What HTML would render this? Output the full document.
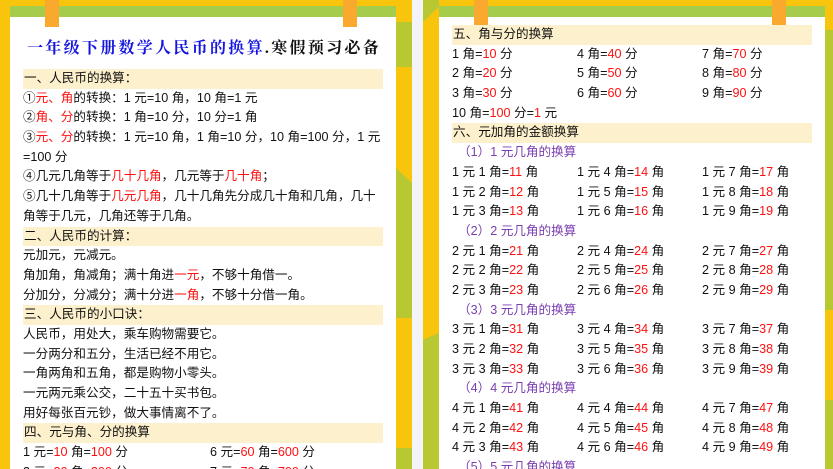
<!DOCTYPE html>
<html><head><meta charset="utf-8"><style>
*{margin:0;padding:0;box-sizing:border-box}
html,body{width:833px;height:469px;overflow:hidden}
body{background:#f3f4f8;position:relative;font-family:"Liberation Sans","Noto Sans CJK SC",sans-serif;font-size:12.6px;color:#111}
.abs{position:absolute}
.y{background:#f9c50c}
.g{background:#b8c832}
.card{background:#fff}
.bar{background:#a6cc4b;height:11px;top:6px}
.tab{background:#f9aa2e;width:14px;top:0;height:27px}
.lines div{height:19.7px;line-height:19.7px;white-space:nowrap}
.h{background:#fdf0cc;padding-left:1px}
.r{color:#ff1010}
.p{color:#7a3fb0;padding-left:6px}
.c{display:inline-block}
</style></head><body>
<div class="abs y" style="left:0;top:0;width:412px;height:469px"></div>
<div class="abs g" style="left:396px;top:22px;width:16px;height:45px;clip-path:polygon(0 0,100% 0,100% 100%,0 100%)"></div>
<div class="abs g" style="left:396px;top:168px;width:16px;height:150px;clip-path:polygon(0 0,100% 10%,100% 100%,0 100%)"></div>
<div class="abs g" style="left:396px;top:448px;width:16px;height:21px"></div>
<div class="abs card" style="left:10px;top:6px;width:386px;height:463px"></div>
<div class="abs bar" style="left:10px;width:386px"></div>
<div class="abs tab" style="left:45px"></div>
<div class="abs tab" style="left:343px"></div>
<div class="abs" style="left:27px;top:35px;font-family:'Liberation Serif','Noto Serif CJK SC',serif;font-weight:bold;font-size:16px;letter-spacing:2.3px;white-space:nowrap;color:#111"><span style="color:#1515e0">一年级下册数学人民币的换算</span>.寒假预习必备</div>
<div class="abs lines" style="left:23px;top:69px;width:360px">
<div class="h">一、人民币的换算：</div>
<div>①<span class="r">元、角</span>的转换：1 元=10 角，10 角=1 元</div>
<div>②<span class="r">角、分</span>的转换：1 角=10 分，10 分=1 角</div>
<div>③<span class="r">元、分</span>的转换：1 元=10 角，1 角=10 分，10 角=100 分，1 元</div>
<div>=100 分</div>
<div>④几元几角等于<span class="r">几十几角</span>，几元等于<span class="r">几十角</span>；</div>
<div>⑤几十几角等于<span class="r">几元几角</span>，几十几角先分成几十角和几角，几十</div>
<div>角等于几元，几角还等于几角。</div>
<div class="h">二、人民币的计算：</div>
<div>元加元，元减元。</div>
<div>角加角，角减角；满十角进<span class="r">一元</span>，不够十角借一。</div>
<div>分加分，分减分；满十分进<span class="r">一角</span>，不够十分借一角。</div>
<div class="h">三、人民币的小口诀：</div>
<div>人民币，用处大，乘车购物需要它。</div>
<div>一分两分和五分，生活已经不用它。</div>
<div>一角两角和五角，都是购物小零头。</div>
<div>一元两元乘公交，二十五十买书包。</div>
<div>用好每张百元钞，做大事情离不了。</div>
<div class="h">四、元与角、分的换算</div>
<div><span class="c" style="width:187px">1 元=<span class="r">10</span> 角=<span class="r">100</span> 分</span>6 元=<span class="r">60</span> 角=<span class="r">600</span> 分</div>
<div><span class="c" style="width:187px">2 元=<span class="r">20</span> 角=<span class="r">200</span> 分</span>7 元=<span class="r">70</span> 角=<span class="r">700</span> 分</div>
</div>
<div class="abs y" style="left:423px;top:0;width:410px;height:469px"></div>
<div class="abs g" style="left:423px;top:0;width:16px;height:22px;clip-path:polygon(0 0,100% 0,100% 30%,0 100%)"></div>
<div class="abs g" style="left:423px;top:333px;width:16px;height:136px;clip-path:polygon(0 5%,100% 0,100% 100%,0 100%)"></div>
<div class="abs g" style="left:825px;top:30px;width:8px;height:280px"></div>
<div class="abs g" style="left:825px;top:400px;width:8px;height:69px"></div>
<div class="abs card" style="left:439px;top:6px;width:386px;height:463px"></div>
<div class="abs bar" style="left:439px;width:386px"></div>
<div class="abs tab" style="left:474px"></div>
<div class="abs tab" style="left:772px"></div>
<div class="abs lines" style="left:452px;top:25px;width:360px">
<div class="h">五、角与分的换算</div>
<div><span class="c" style="width:125px">1 角=<span class="r">10</span> 分</span><span class="c" style="width:125px">4 角=<span class="r">40</span> 分</span>7 角=<span class="r">70</span> 分</div>
<div><span class="c" style="width:125px">2 角=<span class="r">20</span> 分</span><span class="c" style="width:125px">5 角=<span class="r">50</span> 分</span>8 角=<span class="r">80</span> 分</div>
<div><span class="c" style="width:125px">3 角=<span class="r">30</span> 分</span><span class="c" style="width:125px">6 角=<span class="r">60</span> 分</span>9 角=<span class="r">90</span> 分</div>
<div>10 角=<span class="r">100</span> 分=<span class="r">1</span> 元</div>
<div class="h">六、元加角的金额换算</div>
<div class="p">（1）1 元几角的换算</div>
<div><span class="c" style="width:125px">1 元 1 角=<span class="r">11</span> 角</span><span class="c" style="width:125px">1 元 4 角=<span class="r">14</span> 角</span>1 元 7 角=<span class="r">17</span> 角</div>
<div><span class="c" style="width:125px">1 元 2 角=<span class="r">12</span> 角</span><span class="c" style="width:125px">1 元 5 角=<span class="r">15</span> 角</span>1 元 8 角=<span class="r">18</span> 角</div>
<div><span class="c" style="width:125px">1 元 3 角=<span class="r">13</span> 角</span><span class="c" style="width:125px">1 元 6 角=<span class="r">16</span> 角</span>1 元 9 角=<span class="r">19</span> 角</div>
<div class="p">（2）2 元几角的换算</div>
<div><span class="c" style="width:125px">2 元 1 角=<span class="r">21</span> 角</span><span class="c" style="width:125px">2 元 4 角=<span class="r">24</span> 角</span>2 元 7 角=<span class="r">27</span> 角</div>
<div><span class="c" style="width:125px">2 元 2 角=<span class="r">22</span> 角</span><span class="c" style="width:125px">2 元 5 角=<span class="r">25</span> 角</span>2 元 8 角=<span class="r">28</span> 角</div>
<div><span class="c" style="width:125px">2 元 3 角=<span class="r">23</span> 角</span><span class="c" style="width:125px">2 元 6 角=<span class="r">26</span> 角</span>2 元 9 角=<span class="r">29</span> 角</div>
<div class="p">（3）3 元几角的换算</div>
<div><span class="c" style="width:125px">3 元 1 角=<span class="r">31</span> 角</span><span class="c" style="width:125px">3 元 4 角=<span class="r">34</span> 角</span>3 元 7 角=<span class="r">37</span> 角</div>
<div><span class="c" style="width:125px">3 元 2 角=<span class="r">32</span> 角</span><span class="c" style="width:125px">3 元 5 角=<span class="r">35</span> 角</span>3 元 8 角=<span class="r">38</span> 角</div>
<div><span class="c" style="width:125px">3 元 3 角=<span class="r">33</span> 角</span><span class="c" style="width:125px">3 元 6 角=<span class="r">36</span> 角</span>3 元 9 角=<span class="r">39</span> 角</div>
<div class="p">（4）4 元几角的换算</div>
<div><span class="c" style="width:125px">4 元 1 角=<span class="r">41</span> 角</span><span class="c" style="width:125px">4 元 4 角=<span class="r">44</span> 角</span>4 元 7 角=<span class="r">47</span> 角</div>
<div><span class="c" style="width:125px">4 元 2 角=<span class="r">42</span> 角</span><span class="c" style="width:125px">4 元 5 角=<span class="r">45</span> 角</span>4 元 8 角=<span class="r">48</span> 角</div>
<div><span class="c" style="width:125px">4 元 3 角=<span class="r">43</span> 角</span><span class="c" style="width:125px">4 元 6 角=<span class="r">46</span> 角</span>4 元 9 角=<span class="r">49</span> 角</div>
<div class="p">（5）5 元几角的换算</div>
</div>
</body></html>
